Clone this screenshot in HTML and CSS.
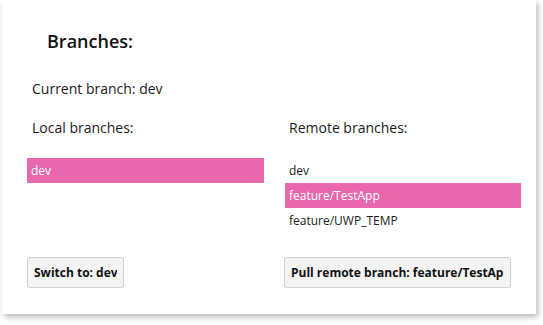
FILE: index.html
```html
<!DOCTYPE html>
<html lang="en">
<head>
    <meta charset="UTF-8">
    <title>Branches</title>
    <link rel="stylesheet" href="styles.css">
</head>
<body>
<div class="panel">
    <h1 class="panel-title">Branches:</h1>

    <div class="current-branch">Current branch: dev</div>

    <div class="columns">
        <div class="column">
            <div class="column-label">Local branches:</div>
            <ul class="branch-list">
                <li class="branch-item selected">dev</li>
            </ul>
            <button class="action-button switch-button"><span class="button-text">Switch to: dev</span></button>
        </div>

        <div class="column">
            <div class="column-label">Remote branches:</div>
            <ul class="branch-list">
                <li class="branch-item">dev</li>
                <li class="branch-item selected">feature/TestApp</li>
                <li class="branch-item">feature/UWP_TEMP</li>
            </ul>
            <button class="action-button pull-button"><span class="button-text">Pull remote branch: feature/TestApp</span></button>
        </div>
    </div>
</div>
</body>
</html>
```

FILE: styles.css
```css
* {
    margin: 0;
    padding: 0;
    box-sizing: border-box;
}

body {
    font-family: 'Open Sans', 'Noto Sans', sans-serif;
    background: white;
    color: #1a1a1a;
    width: 543px;
    height: 325px;
    overflow: hidden;
}

.panel {
    margin-left: 2px;
    width: 534px;
    height: 314px;
    background: white;
    box-shadow: 2px 3px 6px rgba(0, 0, 0, 0.28);
    padding: 27px 15px 0 25px;
}

.panel-title {
    font-size: 18px;
    font-weight: 600;
    line-height: 28px;
    margin-left: 20px;
    color: #111;
}

.current-branch {
    font-size: 14px;
    line-height: 20px;
    margin-top: 24px;
    padding-left: 5px;
}

.columns {
    display: grid;
    grid-template-columns: 237px 236px;
    column-gap: 21px;
    margin-top: 19px;
}

.column-label {
    font-size: 14px;
    line-height: 20px;
    padding-left: 5px;
}

.column:last-child .column-label {
    padding-left: 4px;
}

.branch-list {
    list-style: none;
    margin-top: 20px;
    height: 75px;
}

.branch-item {
    height: 25px;
    line-height: 25px;
    font-size: 12px;
    padding-left: 4px;
    color: #1a1a1a;
}

.branch-item.selected {
    background: #e967ab;
    color: white;
}

.action-button {
    margin-top: 24px;
    height: 31px;
    padding: 0 6px;
    background: #f4f4f4;
    border: 1px solid #cfcfcf;
    border-radius: 3px;
    font-family: inherit;
    font-size: 12px;
    font-weight: 700;
    color: #111;
}

.button-text {
    display: block;
    white-space: nowrap;
    overflow: hidden;
    text-align: left;
}

.switch-button {
    width: 97px;
}

.pull-button {
    width: 227px;
    margin-left: -1px;
}
```
